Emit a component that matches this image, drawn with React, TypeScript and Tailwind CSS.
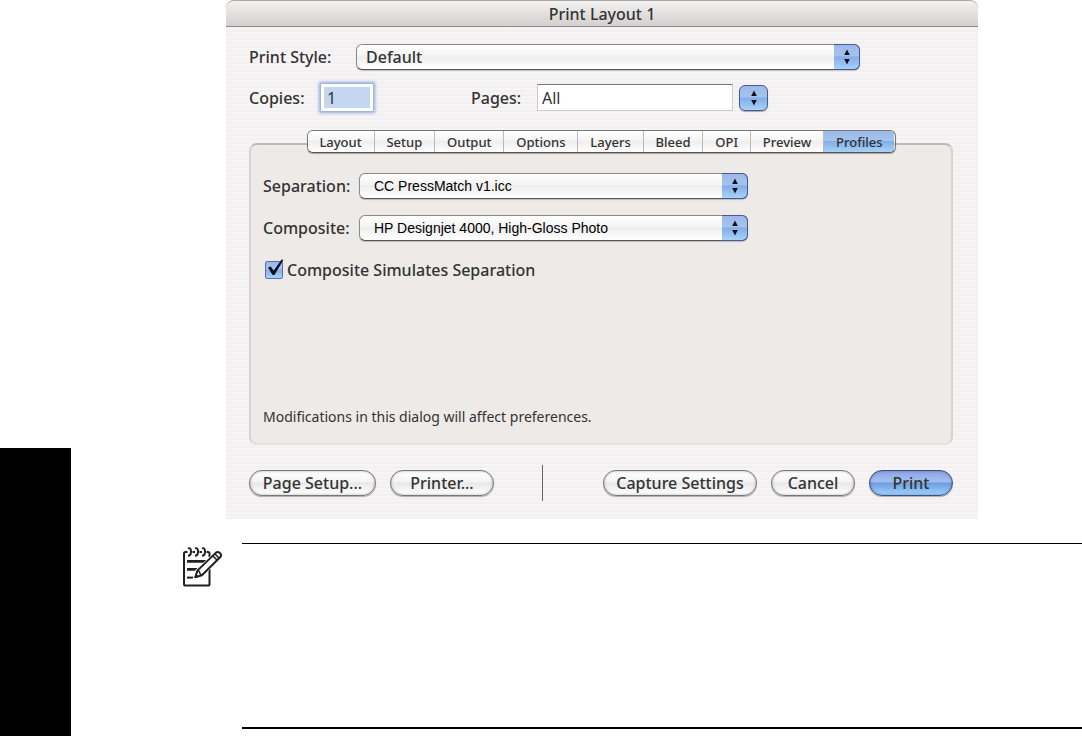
import React, { useState } from 'react';
import clsx from 'clsx';

const tabs = ['Layout', 'Setup', 'Output', 'Options', 'Layers', 'Bleed', 'OPI', 'Preview', 'Profiles'];

const aquaBlue =
  'bg-[linear-gradient(to_bottom,#9db9e8_0%,#a5c3ef_45%,#84aee8_50%,#a4d3f8_100%)]';

const Arrows = () => (
  <svg viewBox="0 0 6 16" className="h-4 w-[6px]" fill="#10131c" aria-hidden="true">
    <path d="M3 0.5 5.8 6H0.2z" />
    <path d="M3 15.5 5.8 10H0.2z" />
  </svg>
);

interface PopupProps {
  id: string;
  options: string[];
  className?: string;
  textClass: string;
}

const Popup = ({ id, options, className, textClass }: PopupProps) => (
  <div className={clsx('relative', className)}>
    <select
      id={id}
      className={clsx(
        'block h-[26px] w-full appearance-none rounded-md border border-[#8a8a8a] border-b-[#555] bg-[linear-gradient(to_bottom,#fff_0%,#f5f4f4_45%,#efeeee_50%,#fff_100%)] pr-8 shadow-[0_1px_1px_rgba(0,0,0,0.2)] outline-none',
        textClass
      )}
    >
      {options.map((option) => (
        <option key={option}>{option}</option>
      ))}
    </select>
    <span
      className={clsx(
        'pointer-events-none absolute inset-y-0 right-0 flex w-[26px] items-center justify-center rounded-r-md border border-l-0 border-[#4d5795]',
        aquaBlue
      )}
    >
      <Arrows />
    </span>
  </div>
);

interface PillButtonProps {
  children: React.ReactNode;
  className: string;
  primary?: boolean;
}

const PillButton = ({ children, className, primary }: PillButtonProps) => (
  <button
    type="button"
    className={clsx(
      'h-[26px] shrink-0 rounded-full border leading-5 shadow-[0_1px_1px_rgba(0,0,0,0.3),inset_0_0_3px_rgba(0,0,0,0.3)]',
      primary
        ? 'border-[#3f4a8c] bg-[linear-gradient(to_bottom,#8ba6e2_0%,#a3bff0_45%,#6f9be2_50%,#9bd5fa_100%)]'
        : 'border-[#777] bg-[linear-gradient(to_bottom,#fff_0%,#f5f4f4_45%,#e9e8e8_50%,#fff_100%)]',
      className
    )}
  >
    {children}
  </button>
);

const NoteIcon = () => (
  <svg viewBox="0 0 40 40" className="mt-1 size-10 shrink-0" fill="none" stroke="#231f20" aria-hidden="true">
    {/* notepad */}
    <path strokeWidth="2" d="M4.5 5H2.5Q1 5 1 6.5V37Q1 38.6 2.5 38.6H25Q26.5 38.6 26.5 37V22M26.5 10V6.5Q26.5 5 25 5H23.5" />
    <path strokeWidth="2" d="M9.5 5H12M16.5 5H19" />
    {/* rings */}
    <path
      strokeWidth="2"
      d="M5 1.4Q8 .2 8 4.5T5 8.8M12 1.4Q15 .2 15 4.5T12 8.8M19 1.4Q22 .2 22 4.5T19 8.8"
    />
    <path strokeWidth="2.8" d="M4 14.3H23M4 22.3H16" />
    <path strokeWidth="2" d="M4 30.6H11" />
    {/* pencil */}
    <path fill="#fff" stroke="#fff" strokeWidth="3.4" d="M12 30.3 14 24 33.8 5.2 37.8 8.8 18.5 28.5z" />
    <path
      fill="#fff"
      strokeWidth="2"
      strokeLinejoin="round"
      d="M12.3 30.2 14.4 23.6 33 5.6Q34.8 4.2 36.9 6T37.4 10L18.9 28.3z"
    />
    <path strokeWidth="1.6" d="M14.4 23.6Q16.2 23.4 16.7 25.6T18.9 28.3M29.7 8.8 34.2 13.2M31.8 6.8 36.2 11.2" />
    <path fill="#231f20" strokeWidth="1" d="M12 30.4 13 27.4 15 29.4z" />
  </svg>
);

const App = () => {
  const [activeTab, setActiveTab] = useState('Profiles');
  const [copies, setCopies] = useState('1');
  const [pages, setPages] = useState('All');
  const [simulate, setSimulate] = useState(true);

  return (
    <div className="flex min-h-screen bg-white font-['Noto_Sans',sans-serif] text-[16px] leading-5 font-medium text-[#333]">
      <aside className="flex w-[71px] shrink-0 flex-col justify-end">
        <div className="h-72 bg-black" />
      </aside>

      <main className="flex min-w-0 flex-1 flex-col">
        <section className="mr-[104px] ml-[155px] bg-[repeating-linear-gradient(to_bottom,#f7f4f5_0px,#f7f4f5_2px,#f3f0f1_2px,#f3f0f1_4px)]">
          <div className="bg-white">
            <header className="flex h-[27px] items-center justify-center rounded-t-lg border-t border-b border-t-[#aaa] border-b-[#8c8c8c] bg-linear-to-b from-[#f3f2f1] to-[#d3d0ce]">
              <h1>Print Layout 1</h1>
            </header>
          </div>

          <div className="pt-[17px] pr-[25px] pb-[18px] pl-[23px]">
            <div className="flex items-center">
              <label htmlFor="style" className="w-[107px]">Print Style:</label>
              <Popup id="style" options={['Default']} className="w-[504px]" textClass="pl-[9px]" />
            </div>

            <div className="mt-[14px] flex items-center">
              <label htmlFor="copies" className="w-[72px]">Copies:</label>
              <div className="h-[27px] w-[52px] bg-white p-[3px] shadow-[0_0_3px_2px_#8fa9d8]">
                <input
                  id="copies"
                  value={copies}
                  onChange={(e) => setCopies(e.target.value)}
                  className="block h-full w-full bg-[#c5d7f0] pl-[3px] font-normal outline-none"
                />
              </div>
              <label htmlFor="pages" className="ml-[98px] w-[66px]">Pages:</label>
              <input
                id="pages"
                value={pages}
                onChange={(e) => setPages(e.target.value)}
                className="h-[27px] w-[196px] border border-[#ccc] border-t-[#777] bg-white pl-1 font-normal outline-none"
              />
              <button
                type="button"
                aria-label="Page range"
                className={clsx('ml-1.5 flex h-[26px] w-[29px] items-center justify-center rounded-md border border-[#4d5795] shadow-[0_1px_1px_rgba(0,0,0,0.3)]', aquaBlue)}
              >
                <Arrows />
              </button>
            </div>

            <div role="tablist" className="relative z-10 mx-auto mt-[19px] flex h-[23px] w-[589px] max-w-full overflow-hidden rounded-md border border-[#777] border-b-[#555] shadow-[0_1px_1px_rgba(0,0,0,0.3)]">
              {tabs.map((tab) => (
                <button
                  key={tab}
                  type="button"
                  role="tab"
                  aria-selected={tab === activeTab}
                  onClick={() => setActiveTab(tab)}
                  className={clsx(
                    'flex-auto border-r border-[#bbb] text-[13px] leading-5 last:border-r-0',
                    tab === activeTab
                      ? aquaBlue
                      : 'bg-[linear-gradient(to_bottom,#fff_0%,#f6f5f5_45%,#efeeee_50%,#fff_100%)]'
                  )}
                >
                  {tab}
                </button>
              ))}
            </div>

            <div className="-mt-2.5 rounded-lg border-2 border-[#d6d4d2] border-t-[#bdbbb9] border-b-[#e3e0de] bg-[#edeae7] px-3 pt-7 pb-4">
              <div className="flex items-center">
                <label htmlFor="separation" className="w-24">Separation:</label>
                <Popup
                  id="separation"
                  options={['CC PressMatch v1.icc']}
                  className="w-[389px]"
                  textClass="pl-[14px] font-['Liberation_Sans',sans-serif] text-[14px] font-normal text-black"
                />
              </div>
              <div className="mt-4 flex items-center">
                <label htmlFor="composite" className="w-24">Composite:</label>
                <Popup
                  id="composite"
                  options={['HP Designjet 4000, High-Gloss Photo']}
                  className="w-[389px]"
                  textClass="pl-[14px] font-['Liberation_Sans',sans-serif] text-[14px] font-normal text-black"
                />
              </div>
              <label className="mt-[19px] flex items-center">
                <span className="relative mr-1 ml-0.5 size-[18px]">
                  <input
                    type="checkbox"
                    checked={simulate}
                    onChange={(e) => setSimulate(e.target.checked)}
                    className={clsx('block size-[18px] appearance-none rounded-xs border border-[#5f6ea3]', aquaBlue)}
                  />
                  {simulate && (
                    <svg viewBox="0 0 20 20" className="pointer-events-none absolute -top-0.5 left-0 size-5" fill="#0d0f18" aria-hidden="true">
                      <path d="M3 8.5 5.8 7.4 8.6 11.8 16.6 0.6 18.4 1 9.4 16H7.6z" />
                    </svg>
                  )}
                </span>
                Composite Simulates Separation
              </label>
              <p className="mt-[127px] text-[14px] font-normal">Modifications in this dialog will affect preferences.</p>
            </div>

            <footer className="mt-5 flex items-center">
              <PillButton className="w-[127px]">Page Setup...</PillButton>
              <PillButton className="ml-3.5 w-[104px]">Printer...</PillButton>
              <span className="ml-12 h-9 w-px bg-[#666]" />
              <div className="ml-auto flex gap-3.5">
                <PillButton className="w-[154px]">Capture Settings</PillButton>
                <PillButton className="w-[84px]">Cancel</PillButton>
                <PillButton className="w-[84px]" primary>Print</PillButton>
              </div>
            </footer>
          </div>
        </section>

        <section className="mt-6 mb-[7px] flex flex-1 pl-28">
          <NoteIcon />
          <div className="ml-[19px] flex-1 border-t border-b-2 border-black" />
        </section>
      </main>
    </div>
  );
};

export default App;
